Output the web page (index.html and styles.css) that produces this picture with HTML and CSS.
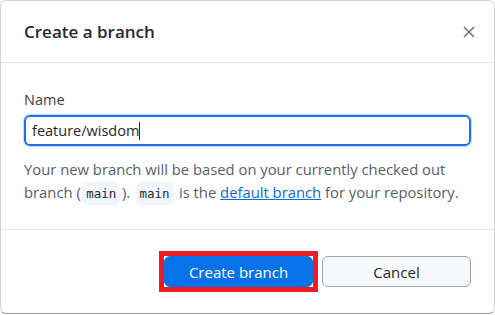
FILE: index.html
```html
<!DOCTYPE html>
<html lang="en">
<head>
    <meta charset="UTF-8">
    <meta name="viewport" content="width=device-width, initial-scale=1.0">
    <title>Create a branch</title>
    <link rel="stylesheet" href="styles.css">
</head>
<body>
    <div class="dialog">
        <div class="dialog-header">
            <h2>Create a branch</h2>
            <button class="close" type="button" aria-label="Close">
                <svg width="12" height="12" viewBox="0 0 12 12">
                    <path d="M1 1L11 11M11 1L1 11" stroke="#6a737d" stroke-width="1.5" fill="none"/>
                </svg>
            </button>
        </div>
        <div class="dialog-body">
            <label for="branchName">Name</label>
            <div class="input-box">
                <span class="value">feature/wisdom</span><span class="caret"></span>
            </div>
            <p class="hint">
                Your new branch will be based on your currently checked out
                branch (<code>main</code>). <code>main</code> is the
                <a href="#">default branch</a> for your repository.
            </p>
        </div>
        <div class="dialog-footer">
            <span class="marked">
                <button class="btn primary" type="submit">Create branch</button>
            </span>
            <button class="btn" type="button">Cancel</button>
        </div>
    </div>
</body>
</html>
```

FILE: styles.css
```css
body {
    margin: 0;
    font-family: "Open Sans", "Noto Sans", sans-serif;
    font-size: 14px;
    color: #24292e;
    background-color: #ffffff;
}
.dialog {
    width: 495px;
    height: 314px;
    box-sizing: border-box;
    border: 1px solid #d1d5da;
    border-bottom-color: #9a9fa5;
    border-radius: 6px;
    background-color: #ffffff;
    display: flex;
    flex-direction: column;
}
.dialog-header {
    height: 61px;
    padding: 0 13px 0 23px;
    display: flex;
    align-items: center;
    justify-content: space-between;
    border-bottom: 1px solid #e1e4e8;
}
h2 {
    margin: 0;
    font-size: 17px;
    font-weight: 600;
    color: #24292e;
}
.close {
    width: 24px;
    height: 24px;
    border: none;
    background: none;
    padding: 0;
    display: flex;
    align-items: center;
    justify-content: center;
}
.dialog-body {
    padding: 27px 23px 24px 23px;
    border-bottom: 1px solid #e1e4e8;
}
label {
    display: block;
    line-height: 20px;
    font-size: 14.5px;
    color: #3a3f45;
    margin-bottom: 5px;
}
.input-box {
    height: 31px;
    box-sizing: border-box;
    border: 2px solid #1a73e8;
    border-radius: 6px;
    box-shadow: 0 0 0 1px rgba(26, 115, 232, 0.25);
    padding: 0 6px;
    display: flex;
    align-items: center;
}
.value {
    color: #24292e;
    font-size: 14.5px;
}
.caret {
    width: 1px;
    height: 18px;
    background-color: #24292e;
}
.hint {
    margin: 12px 0 0;
    font-size: 14.8px;
    line-height: 23px;
    color: #586069;
}
code {
    font-family: "DejaVu Sans Mono", monospace;
    font-size: 12.5px;
    color: #24292e;
    background-color: #f1f6fd;
    border-radius: 6px;
    padding: 4px 4px;
    margin: 0 1.5px;
}
a {
    color: #0a69da;
}
.dialog-footer {
    flex: 1;
    padding: 0 23px;
    display: flex;
    align-items: center;
    justify-content: flex-end;
    gap: 9px;
}
.btn {
    width: 149px;
    height: 31px;
    border: 1px solid #a0a7ae;
    border-radius: 6px;
    background-color: #f6f8fa;
    color: #24292e;
    font-family: inherit;
    font-size: 15px;
    cursor: pointer;
}
.btn.primary {
    border-color: #0772ea;
    background-color: #0772ea;
    color: #ffffff;
}
.marked {
    position: relative;
    display: flex;
}
.marked::after {
    content: "";
    position: absolute;
    top: -5px;
    left: -5px;
    right: -5px;
    bottom: -5px;
    border: 5px solid #ed1c24;
    pointer-events: none;
}
```
